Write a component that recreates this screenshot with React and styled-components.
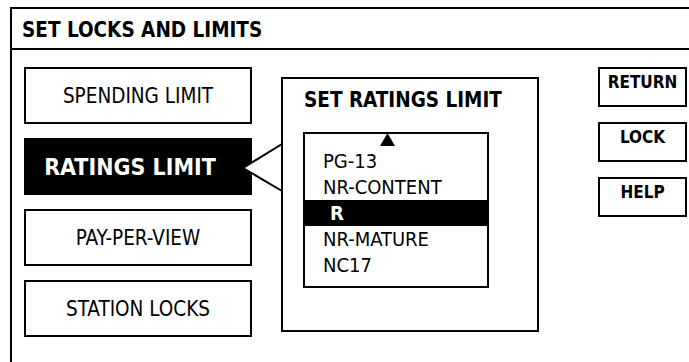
import React from 'react'
import styled, { createGlobalStyle } from 'styled-components'

const GlobalStyle = createGlobalStyle`
    *, *::before, *::after { box-sizing: border-box; }
    html, body { margin: 0; padding: 0; background: #fff; }
    body {
        font-family: "DejaVu Sans Condensed", "Liberation Sans Narrow", sans-serif;
        color: #000;
        overflow: hidden;
    }
`;

const menuItems = ['SPENDING LIMIT', 'RATINGS LIMIT', 'PAY-PER-VIEW', 'STATION LOCKS']
const ratings = ['PG-13', 'NR-CONTENT', 'R', 'NR-MATURE', 'NC17']
const actions = ['RETURN', 'LOCK', 'HELP']

function App() {
    const activeMenu = 'RATINGS LIMIT'
    const selectedRating = 'R'

    return (
        <>
            <GlobalStyle />
            <Frame>
                <TitleBar>SET LOCKS AND LIMITS</TitleBar>
                <Content>
                    <MenuColumn>
                        {menuItems.map(item => (
                            <MenuButton key={item} $active={item === activeMenu}>
                                {item}
                            </MenuButton>
                        ))}
                    </MenuColumn>

                    <Panel>
                        {/* callout pointing back to the active menu item */}
                        <Pointer width="42" height="60" viewBox="0 0 42 60">
                            <polygon points="1,31 39,7 39,54" fill="#fff" />
                            <polyline points="40,7 1,31 40,54" fill="none" stroke="#000" strokeWidth="2" />
                        </Pointer>
                        <PanelTitle>SET RATINGS LIMIT</PanelTitle>
                        <RatingList>
                            <ScrollUp width="15" height="13" viewBox="0 0 15 13">
                                <polygon points="7.5,0 15,13 0,13" fill="#000" />
                            </ScrollUp>
                            {ratings.map(r => (
                                <RatingItem key={r} $selected={r === selectedRating}>
                                    {r}
                                </RatingItem>
                            ))}
                        </RatingList>
                    </Panel>

                    <ActionColumn>
                        {actions.map(a => (
                            <ActionButton key={a}>{a}</ActionButton>
                        ))}
                    </ActionColumn>
                </Content>
            </Frame>
        </>
    )
}

const Frame = styled.div`
    margin: 7px 0 0 10px;
    height: calc(100vh - 7px);
    border-left: 2px solid #000;
    border-top: 2px solid #000;
    display: flex;
    flex-direction: column;
`;

const TitleBar = styled.div`
    height: 41px;
    border-bottom: 2px solid #000;
    padding: 9px 0 0 10px;
    font-size: 20.5px;
    line-height: 24px;
    font-weight: bold;
`;

const Content = styled.div`
    display: flex;
    align-items: flex-start;
    padding: 17px 0 0 12px;
`;

const MenuColumn = styled.div`
    display: flex;
    flex-direction: column;
    gap: 14px;
    width: 228px;
`;

const MenuButton = styled.div`
    height: 57px;
    border: 2px solid #000;
    display: flex;
    align-items: center;
    justify-content: center;
    padding-right: ${p => p.$active ? '16px' : '0'};
    font-size: ${p => p.$active ? '23px' : '20.5px'};
    font-weight: ${p => p.$active ? 'bold' : 'normal'};
    background: ${p => p.$active ? '#000' : '#fff'};
    color: ${p => p.$active ? '#fff' : '#000'};
`;

const Panel = styled.div`
    position: relative;
    margin: 10px 0 0 29px;
    width: 258px;
    height: 255px;
    border: 2px solid #000;
    padding: 9px 0 0 20px;
`;

const Pointer = styled.svg`
    position: absolute;
    left: -41px;
    top: 58px;
    display: block;
`;

const PanelTitle = styled.div`
    font-size: 20.5px;
    line-height: 24px;
    font-weight: bold;
    padding-left: 1px;
`;

const RatingList = styled.div`
    margin-top: 20px;
    width: 186px;
    height: 156px;
    border: 2px solid #000;
    padding-top: 14px;
    position: relative;
`;

const ScrollUp = styled.svg`
    position: absolute;
    left: 75px;
    top: -1px;
    display: block;
`;

const RatingItem = styled.div`
    height: 26px;
    line-height: 26px;
    font-size: 20px;
    padding-left: ${p => p.$selected ? '25px' : '18px'};
    font-weight: ${p => p.$selected ? 'bold' : 'normal'};
    background: ${p => p.$selected ? '#000' : 'transparent'};
    color: ${p => p.$selected ? '#fff' : '#000'};
`;

const ActionColumn = styled.div`
    display: flex;
    flex-direction: column;
    gap: 15px;
    margin-left: 59px;
    width: 89px;
`;

const ActionButton = styled.div`
    height: 40px;
    border: 2px solid #000;
    padding-top: 3px;
    text-align: center;
    font-size: 17px;
    line-height: 20px;
    font-weight: bold;
`;

export default App
